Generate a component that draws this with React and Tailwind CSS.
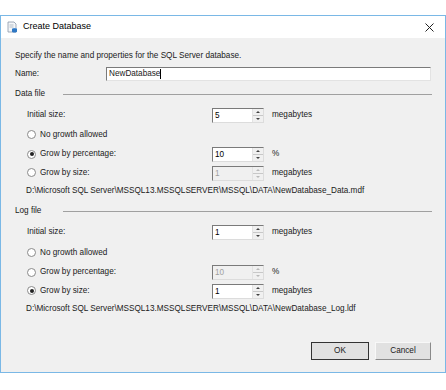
import { useState } from 'react'

function Spinner({ value, disabled }) {
  return (
    <div
      className={
        'flex h-[15px] w-[52px] border border-t-[#7a7a7a] border-l-[#7a7a7a] border-r-[#dcdcdc] border-b-[#dcdcdc] ' +
        (disabled ? 'bg-[#f0f0f0] text-[#a0a0a0]' : 'bg-white text-black')
      }
    >
      <div className="flex-1 pl-[2px] leading-[13px]">{value}</div>
      <div className="flex w-[11px] flex-col border-l border-[#e3e3e3]">
        <div className="flex flex-1 items-center justify-center border-b border-[#c8c8c8] bg-[#f0f0f0]">
          <div className={'h-0 w-0 border-x-[2px] border-b-[2px] border-x-transparent ' + (disabled ? 'border-b-[#b8b8b8]' : 'border-b-[#404040]')} />
        </div>
        <div className="flex flex-1 items-center justify-center bg-[#f0f0f0]">
          <div className={'h-0 w-0 border-x-[2px] border-t-[2px] border-x-transparent ' + (disabled ? 'border-t-[#b8b8b8]' : 'border-t-[#404040]')} />
        </div>
      </div>
    </div>
  )
}

function Radio({ checked }) {
  return (
    <div className="flex h-[9px] w-[9px] items-center justify-center rounded-full border border-[#8a8a8a] bg-white">
      {checked ? <div className="h-[4px] w-[4px] rounded-full bg-[#222]" /> : null}
    </div>
  )
}

function SizeRow({ h, label, value, unit, disabled, radio, checked }) {
  return (
    <div className="flex items-center pl-[26px]" style={{ height: h }}>
      <div className="flex w-[185px] items-center">
        {radio ? (
          <>
            <Radio checked={checked} />
            <span className="ml-[4px]">{label}</span>
          </>
        ) : (
          <span>{label}</span>
        )}
      </div>
      {value != null ? (
        <>
          <Spinner value={value} disabled={disabled} />
          <span className="ml-[8px]">{unit}</span>
        </>
      ) : null}
    </div>
  )
}

function GroupHeader({ h, title }) {
  return (
    <div className="flex items-center pl-[14px] pr-[13px]" style={{ height: h }}>
      <span className="w-[48px]">{title}</span>
      <div className="h-px flex-1 bg-[#a0a0a0]" />
    </div>
  )
}

export default function App() {
  const [name] = useState('NewDatabase')

  return (
    <div className="h-[390px] w-[446px] bg-white pt-[15px] font-['Liberation_Sans',Arial,sans-serif] text-[8.2px] text-[#1a1a1a]">
      <div className="flex h-[358px] w-[446px] flex-col border border-[#7ab8e6] bg-[#f0f0f0]">
        <div className="flex h-[22px] items-center bg-white pl-[6px] pr-[8px]">
          <svg width="11" height="12" viewBox="0 0 11 12" className="mr-[5px]">
            <path d="M1 1h6l2 2v8H1z" fill="#f4f6f8" stroke="#8a98a8" strokeWidth="0.8" />
            <path d="M2.5 4h4M2.5 6h4" stroke="#9aa6b4" strokeWidth="0.7" />
            <ellipse cx="7.5" cy="8" rx="2.5" ry="1" fill="#4a8fd6" />
            <path d="M5 8v2.5c0 .6 1.1 1 2.5 1s2.5-.4 2.5-1V8" fill="#2f78c4" />
          </svg>
          <span className="text-[9px] text-black">Create Database</span>
          <svg width="9" height="9" viewBox="0 0 9 9" className="ml-auto mr-[3px]">
            <path d="M0.5 0.5l8 8M8.5 0.5l-8 8" stroke="#222" strokeWidth="1" />
          </svg>
        </div>

        <div className="flex flex-col pt-[10px]">
          <div className="flex h-[16px] items-center pl-[14px]">
            Specify the name and properties for the SQL Server database.
          </div>
          <div className="flex h-[20px] items-center pl-[14px] pr-[14px]">
            <span className="w-[91px]">Name:</span>
            <div className="flex h-[14px] flex-1 items-center border border-t-[#7a7a7a] border-l-[#7a7a7a] border-r-[#e3e3e3] border-b-[#e3e3e3] bg-white pl-[2px]">
              <span>{name}</span>
              <span className="h-[10px] w-px bg-black" />
            </div>
          </div>

          <GroupHeader h={21} title="Data file" />
          <SizeRow h={20} label="Initial size:" value="5" unit="megabytes" />
          <SizeRow h={20} label="No growth allowed" radio />
          <SizeRow h={19} label="Grow by percentage:" radio checked value="10" unit="%" />
          <SizeRow h={18} label="Grow by size:" radio value="1" unit="megabytes" disabled />
          <div className="flex h-[18px] items-center pl-[25px]">
            D:\Microsoft SQL Server\MSSQL13.MSSQLSERVER\MSSQL\DATA\NewDatabase_Data.mdf
          </div>

          <GroupHeader h={22} title="Log file" />
          <SizeRow h={21} label="Initial size:" value="1" unit="megabytes" />
          <SizeRow h={20} label="No growth allowed" radio />
          <SizeRow h={19} label="Grow by percentage:" radio value="10" unit="%" disabled />
          <SizeRow h={18} label="Grow by size:" radio checked value="1" unit="megabytes" />
          <div className="flex h-[18px] items-center pl-[25px]">
            D:\Microsoft SQL Server\MSSQL13.MSSQLSERVER\MSSQL\DATA\NewDatabase_Log.ldf
          </div>
        </div>

        <div className="mt-[24px] flex justify-end gap-[6px] pr-[14px]">
          <button className="h-[18px] w-[58px] border border-[#333] bg-[#e1e1e1] text-[8.2px]">OK</button>
          <button className="h-[18px] w-[56px] border border-t-[#f8f8f8] border-l-[#f8f8f8] border-r-[#8a8a8a] border-b-[#8a8a8a] bg-[#e1e1e1] text-[8.2px]">
            Cancel
          </button>
        </div>
      </div>
    </div>
  )
}
